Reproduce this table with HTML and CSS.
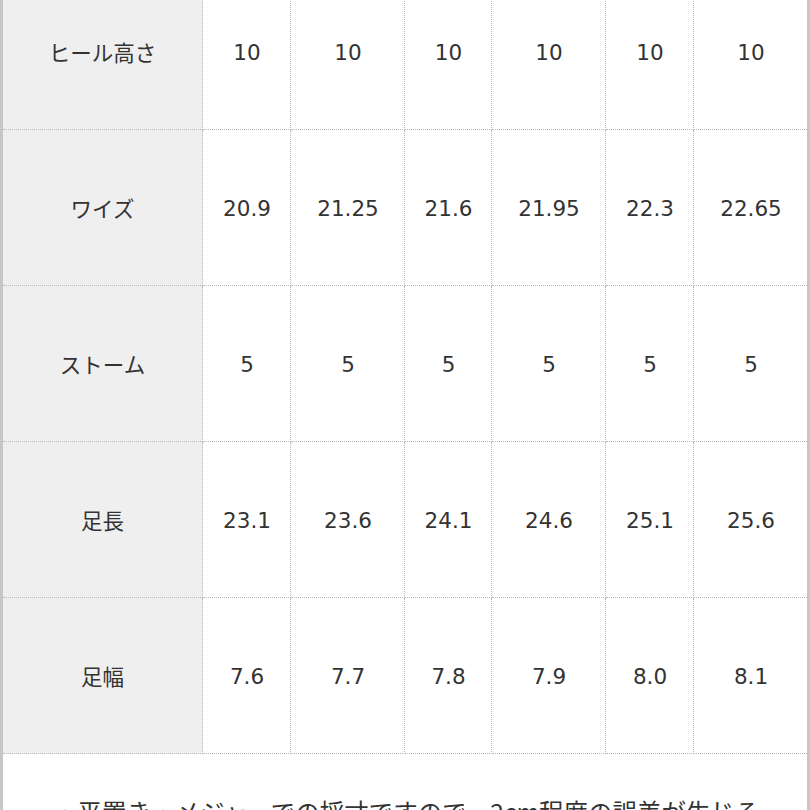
FILE: index.html
```html
<!DOCTYPE html>
<html lang="ja">
<head>
<meta charset="utf-8">
<link rel="stylesheet" href="styles.css">
</head>
<body>
<div class="frame">
  <div class="grid">
    <div class="cell head">ヒール高さ</div>
    <div class="cell num">10</div><div class="cell num">10</div><div class="cell num">10</div><div class="cell num">10</div><div class="cell num">10</div><div class="cell num">10</div>

    <div class="cell head">ワイズ</div>
    <div class="cell num">20.9</div><div class="cell num">21.25</div><div class="cell num">21.6</div><div class="cell num">21.95</div><div class="cell num">22.3</div><div class="cell num">22.65</div>

    <div class="cell head">ストーム</div>
    <div class="cell num">5</div><div class="cell num">5</div><div class="cell num">5</div><div class="cell num">5</div><div class="cell num">5</div><div class="cell num">5</div>

    <div class="cell head">足長</div>
    <div class="cell num">23.1</div><div class="cell num">23.6</div><div class="cell num">24.1</div><div class="cell num">24.6</div><div class="cell num">25.1</div><div class="cell num">25.6</div>

    <div class="cell head">足幅</div>
    <div class="cell num">7.6</div><div class="cell num">7.7</div><div class="cell num">7.8</div><div class="cell num">7.9</div><div class="cell num">8.0</div><div class="cell num">8.1</div>
  </div>
  <p class="note">・平置き・メジャーでの採寸ですので、2cm程度の誤差が生じる</p>
</div>
</body>
</html>
```

FILE: styles.css
```css
html, body {
  margin: 0;
  padding: 0;
  background: #ffffff;
  overflow: hidden;
}
.frame {
  width: 804px;
  height: 810px;
  overflow: hidden;
  border-left: 3px solid #c6c6c6;
  border-right: 3px solid #c6c6c6;
  background: #ffffff;
  color: #333333;
  font-family: "Noto Sans CJK JP", "DejaVu Sans", sans-serif;
}
.grid {
  display: grid;
  grid-template-columns: 200px 88px 114px 87px 114px 88px 113px;
  grid-auto-rows: 156px;
  margin-top: -26px;
}
.cell {
  display: flex;
  align-items: center;
  justify-content: center;
  box-sizing: border-box;
  border-right: 1px dotted #b8b8b8;
  border-bottom: 1px dotted #b8b8b8;
  font-size: 21px;
}
.cell:nth-child(7n) {
  border-right: none;
}
.head {
  background: #efefef;
  font-family: "Noto Sans CJK JP", sans-serif;
  font-size: 21.5px;
}
.num {
  font-family: "DejaVu Sans", "Noto Sans CJK JP", sans-serif;
  font-size: 21.5px;
  padding-top: 2px;
  padding-left: 1px;
}
.note {
  margin: 0;
  padding: 40px 0 0 50px;
  font-size: 24.5px;
  line-height: 36px;
  white-space: nowrap;
}
```
